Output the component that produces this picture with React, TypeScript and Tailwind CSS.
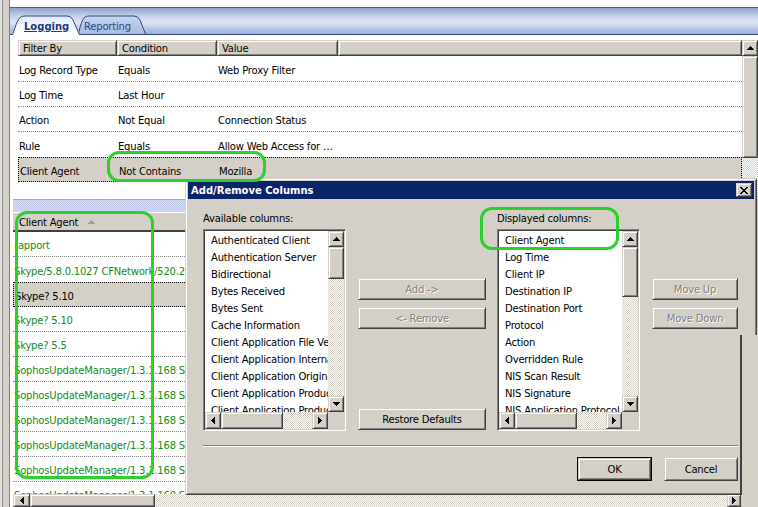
import React from 'react';

type Dir = 'up' | 'down' | 'left' | 'right';

// classic 3d styles
const raised =
  'bg-[#d4d0c8] border border-t-[#d4d0c8] border-l-[#d4d0c8] border-r-[#404040] border-b-[#404040] shadow-[inset_1px_1px_#ffffff,inset_-1px_-1px_#808080]';
const sunken =
  'bg-white border border-t-[#808080] border-l-[#808080] border-r-[#ffffff] border-b-[#ffffff] shadow-[inset_1px_1px_#404040,inset_-1px_-1px_#d4d0c8]';
const dither = 'bg-[image:repeating-conic-gradient(#d4d0c8_0_25%,#ffffff_0_50%)] bg-[length:2px_2px]';

function Arrow({ dir, fill = '#000000' }: { dir: Dir; fill?: string }) {
  const horiz = dir === 'left' || dir === 'right';
  const rects = [0, 1, 2, 3].map(i => {
    const len = 1 + i * 2;
    const off = 3 - i;
    const pos = dir === 'up' || dir === 'left' ? i : 3 - i;
    return horiz ? (
      <rect key={i} x={pos} y={off} width={1} height={len} />
    ) : (
      <rect key={i} x={off} y={pos} width={len} height={1} />
    );
  });
  return (
    <svg width={horiz ? 4 : 7} height={horiz ? 7 : 4} fill={fill} shapeRendering="crispEdges">
      {rects}
    </svg>
  );
}

function ScrollBtn({ dir, className }: { dir: Dir; className: string }) {
  return (
    <div className={`${raised} ${className} shrink-0 flex items-center justify-center`}>
      <Arrow dir={dir} />
    </div>
  );
}

function WinButton({ label, disabled, className }: { label: string; disabled?: boolean; className: string }) {
  return (
    <div
      className={`${raised} ${className} flex items-center justify-center pt-[2px] ${
        disabled ? 'text-[#808080] [text-shadow:1px_1px_0_#ffffff]' : 'text-black'
      }`}
    >
      {label}
    </div>
  );
}

function WindowFrame() {
  return (
    <div className="w-[10px] shrink-0 flex">
      <div className="w-[2px] bg-[#e2e0da]" />
      <div className="w-[1px] bg-[#8e8e8e]" />
      <div className="w-[6px] bg-[#d4d0c8]" />
      <div className="w-[1px] bg-[#808080]" />
    </div>
  );
}

function TabBand() {
  return (
    <div className="h-[28px] shrink-0 flex items-end pl-[2px] border-t border-t-[#4a6294] border-b border-b-[#2b4a82] bg-[linear-gradient(to_bottom,#8fa3cd,#c3cee9_30%,#dfe5f4_55%,#b6c4e2_82%,#9db0d8)]">
      <div className="relative z-10 w-[68px] h-[20px] -mb-px flex items-center pl-[12px] pt-[4px]">
        <svg className="absolute inset-0" width={68} height={20}>
          <defs>
            <linearGradient id="tabOn" x1="0" y1="0" x2="0" y2="1">
              <stop offset="0" stopColor="#e3e9f6" />
              <stop offset="1" stopColor="#ffffff" />
            </linearGradient>
          </defs>
          <path d="M0,20 C3,14 5,4 9,2 Q10.5,1 13,1 L55,1 Q59,1 61,5 L68,20 Z" fill="url(#tabOn)" />
          <path d="M0.5,20 C3,14 5,4 9,2 Q10.5,1 13,1 L55,1 Q59,1 61,5 L67.5,20" fill="none" stroke="#2b4a82" />
        </svg>
        <span className="relative font-bold underline text-[#1d3a78] tracking-normal">Logging</span>
      </div>
      <div className="relative w-[68px] h-[19px] -ml-[2px] flex items-center pl-[6px] pt-[4px]">
        <svg className="absolute inset-0" width={68} height={19}>
          <defs>
            <linearGradient id="tabOff" x1="0" y1="0" x2="0" y2="1">
              <stop offset="0" stopColor="#c9d5ee" />
              <stop offset="1" stopColor="#a9badf" />
            </linearGradient>
          </defs>
          <path
            d="M0.5,19 C2,12 4,4 7,2 Q8.5,1 11,1 L56,1 Q60,1 62,5 L67.5,19"
            fill="url(#tabOff)"
            stroke="#2b4a82"
          />
        </svg>
        <span className="relative text-[#2a4a8c]">Reporting</span>
      </div>
    </div>
  );
}

const filters = [
  { by: 'Log Record Type', cond: 'Equals', value: 'Web Proxy Filter', h: 'h-[26px] pt-[5px]' },
  { by: 'Log Time', cond: 'Last Hour', value: '', h: 'h-[25px] pt-[4px]' },
  { by: 'Action', cond: 'Not Equal', value: 'Connection Status', h: 'h-[25px] pt-[4px]' },
  { by: 'Rule', cond: 'Equals', value: 'Allow Web Access for \u2026', h: 'h-[25px] pt-[4px]' },
  { by: 'Client Agent', cond: 'Not Contains', value: 'Mozilla', h: 'h-[25px] pt-[4px]' },
];

function FilterPanel() {
  const selected = 4;
  return (
    <div className="h-[164px] shrink-0 flex pt-[5px] bg-white">
      <div className="w-[8px]" />
      <div className="flex-1 min-w-0 flex flex-col">
        <div className="h-[16px] flex">
          <div className={`${raised} w-[99px] pl-[4px] pt-[2px] flex items-center`}>Filter By</div>
          <div className={`${raised} w-[100px] pl-[4px] pt-[2px] flex items-center`}>Condition</div>
          <div className={`${raised} w-[121px] pl-[4px] pt-[2px] flex items-center`}>Value</div>
          <div className={`${raised} flex-1`} />
        </div>
        {filters.map((f, i) => {
          const isSel = i === selected;
          const noLine = i + 1 === selected;
          return (
            <div
              key={f.by}
              className={`${f.h} flex items-center ${
                isSel
                  ? 'bg-[#d4d0c8] border border-dotted border-black'
                  : noLine
                    ? ''
                    : 'border-b border-dotted border-[#8a8a8a]'
              }`}
            >
              <div className="w-[99px] pl-[1px] whitespace-nowrap">{f.by}</div>
              <div className="w-[100px] pl-[1px] whitespace-nowrap">{f.cond}</div>
              <div className="w-[121px] pl-[1px] whitespace-nowrap">{f.value}</div>
            </div>
          );
        })}
      </div>
      <div className="w-[16px] flex flex-col">
        <ScrollBtn dir="up" className="h-[16px]" />
        <div className={`${raised} h-[102px]`} />
        <div className={`flex-1 ${dither}`} />
      </div>
    </div>
  );
}

const agents = [
  'rapport',
  'Skype/5.8.0.1027 CFNetwork/520.2.5 Darwin/11.4.2 (x86_64)',
  'Skype? 5.10',
  'Skype? 5.10',
  'Skype? 5.5',
  'SophosUpdateManager/1.3.1.168 SophosAutoUpdate/2.5',
  'SophosUpdateManager/1.3.1.168 SophosAutoUpdate/2.5',
  'SophosUpdateManager/1.3.1.168 SophosAutoUpdate/2.5',
  'SophosUpdateManager/1.3.1.168 SophosAutoUpdate/2.5',
  'SophosUpdateManager/1.3.1.168 SophosAutoUpdate/2.5',
  'SophosUpdateManager/1.3.1.168 SophosAutoUpdate/2.5',
];

function ResultsPanel() {
  const selected = 2;
  return (
    <div className="flex-1 min-h-0 flex bg-white">
      <div className="w-[3px]" />
      <div className="flex-1 min-w-0 flex flex-col">
        <div className="h-[13px] shrink-0 border-t border-t-[#9aa8cc] bg-[image:repeating-conic-gradient(#c0cae8_0_25%,#d6ddf1_0_50%)] bg-[length:2px_2px]" />
        <div className="h-[20px] shrink-0 flex bg-[#d4d0c8] border-b-2 border-b-[#404040]">
          <div className="w-[176px] pl-[6px] pt-[3px] flex items-center border-t border-t-white border-r border-r-[#808080]">
            <span>Client Agent</span>
            <span className="ml-[10px] mb-[2px]">
              <Arrow dir="up" fill="#a0a0a0" />
            </span>
          </div>
        </div>
        <div className="flex-1 min-h-0 overflow-hidden">
          {agents.map((a, i) => {
            const isSel = i === selected;
            const noLine = i + 1 === selected;
            return (
              <div
                key={i}
                className={`h-[25px] pl-[1px] pt-[4px] flex items-center whitespace-nowrap ${
                  isSel
                    ? 'bg-[#d4d0c8] border border-dotted border-black text-black'
                    : noLine
                      ? 'text-[#148c14]'
                      : 'border-b border-dotted border-[#8a8a8a] text-[#148c14]'
                }`}
              >
                {a}
              </div>
            );
          })}
        </div>
        <div className="h-[13px] shrink-0 flex">
          <ScrollBtn dir="left" className="w-[17px]" />
          <div className={`${raised} w-[125px]`} />
          <div className={`flex-1 ${dither}`} />
          <ScrollBtn dir="right" className="w-[14px]" />
        </div>
      </div>
      <div className="w-[17px] bg-[#d4d0c8]" />
    </div>
  );
}

function ListBox({ items, thumb }: { items: string[]; thumb: string }) {
  return (
    <div className={`h-[202px] p-px flex flex-col ${sunken}`}>
      <div className="flex-1 min-h-0 flex">
        <div className="flex-1 min-w-0 overflow-hidden bg-white">
          {items.map((t, i) => (
            <div key={i} className="h-[17px] leading-[19px] pl-[6px] whitespace-nowrap">
              {t}
            </div>
          ))}
        </div>
        <div className="w-[16px] flex flex-col">
          <ScrollBtn dir="up" className="h-[16px]" />
          <div className={`${raised} ${thumb} shrink-0`} />
          <div className={`flex-1 ${dither}`} />
          <ScrollBtn dir="down" className="h-[16px]" />
        </div>
      </div>
      <div className="h-[17px] shrink-0 flex">
        <ScrollBtn dir="left" className="w-[16px]" />
        <div className={`${raised} w-[62px]`} />
        <div className={`flex-1 ${dither}`} />
        <ScrollBtn dir="right" className="w-[16px]" />
        <div className="w-[16px] bg-[#d4d0c8]" />
      </div>
    </div>
  );
}

const available = [
  'Authenticated Client',
  'Authentication Server',
  'Bidirectional',
  'Bytes Received',
  'Bytes Sent',
  'Cache Information',
  'Client Application File Version',
  'Client Application Internal Name',
  'Client Application Original File Name',
  'Client Application Product Name',
  'Client Application Product Version',
];

const displayed = [
  'Client Agent',
  'Log Time',
  'Client IP',
  'Destination IP',
  'Destination Port',
  'Protocol',
  'Action',
  'Overridden Rule',
  'NIS Scan Result',
  'NIS Signature',
  'NIS Application Protocol',
];

function ColumnsDialog() {
  return (
    <div className="absolute left-[185px] top-[178px] w-[572px] h-[317px] p-[3px] flex flex-col bg-[#d4d0c8] shadow-[inset_1px_1px_#d4d0c8,inset_-1px_-1px_#404040,inset_2px_2px_#ffffff,inset_-2px_-2px_#808080]">
      <div className="h-[18px] shrink-0 flex items-center justify-between pl-[3px] pr-[2px] bg-[#0a246a]">
        <span className="font-bold text-white tracking-normal pt-[2px]">Add/Remove Columns</span>
        <div className={`${raised} w-[16px] h-[14px] flex items-center justify-center`}>
          <svg width={8} height={7} shapeRendering="crispEdges">
            <path d="M0,0h2l2,2.5 2-2.5h2L5,3.5 8,7H6L4,4.5 2,7H0L3,3.5z" fill="#000000" />
          </svg>
        </div>
      </div>
      <div className="flex-1 flex flex-col pl-[15px] pr-[16px]">
        <div className="mt-[11px] h-[221px] flex">
          <div className="w-[143px] flex flex-col">
            <div className="h-[14px] leading-[18px]">Available columns:</div>
            <div className="mt-[5px]">
              <ListBox items={available} thumb="h-[32px]" />
            </div>
          </div>
          <div className="ml-[12px] w-[128px] flex flex-col pt-[68px]">
            <WinButton label="Add ->" disabled className="h-[22px]" />
            <WinButton label="<- Remove" disabled className="h-[22px] mt-[7px]" />
            <WinButton label="Restore Defaults" className="h-[22px] mt-auto mb-[1px]" />
          </div>
          <div className="ml-[11px] w-[143px] flex flex-col">
            <div className="h-[14px] leading-[18px]">Displayed columns:</div>
            <div className="mt-[5px]">
              <ListBox items={displayed} thumb="h-[50px]" />
            </div>
          </div>
          <div className="ml-[12px] w-[86px] flex flex-col pt-[68px]">
            <WinButton label="Move Up" disabled className="h-[22px]" />
            <WinButton label="Move Down" disabled className="h-[22px] mt-[7px]" />
          </div>
        </div>
        <div className="mt-[14px] h-[2px] border-t border-t-[#808080] border-b border-b-white" />
        <div className="mt-[10px] flex justify-end gap-[12px]">
          <div className="w-[75px] h-[24px] border border-black flex">
            <WinButton label="OK" className="flex-1" />
          </div>
          <WinButton label="Cancel" className="w-[74px] h-[24px]" />
        </div>
      </div>
      {/* the lower right strip of the captured dialog */}
      <div className="absolute left-[555px] top-[157px] right-0 bottom-0 bg-[#d4d0c8] border-l-2 border-l-[#404040]" />
    </div>
  );
}

function Annotations() {
  return (
    <>
      <div className="absolute left-[107px] top-[151px] w-[159px] h-[31px] border-[3px] border-[#2dcf2d] rounded-[12px] pointer-events-none" />
      <div className="absolute left-[15px] top-[211px] w-[139px] h-[268px] border-[3px] border-[#2dcf2d] rounded-[12px] pointer-events-none" />
      <div className="absolute left-[480px] top-[207px] w-[139px] h-[43px] border-[3px] border-[#2dcf2d] rounded-[12px] pointer-events-none" />
    </>
  );
}

export default function App() {
  return (
    <div className="relative w-[758px] h-[507px] overflow-hidden bg-white font-[family-name:Tahoma,'DejaVu_Sans',sans-serif] text-[10px] tracking-[-0.2px] text-black leading-none select-none">
      <div className="flex h-full">
        <WindowFrame />
        <div className="flex-1 min-w-0 flex flex-col">
          <div className="h-[7px] shrink-0 bg-white" />
          <TabBand />
          <FilterPanel />
          <ResultsPanel />
        </div>
      </div>
      <ColumnsDialog />
      <Annotations />
    </div>
  );
}
